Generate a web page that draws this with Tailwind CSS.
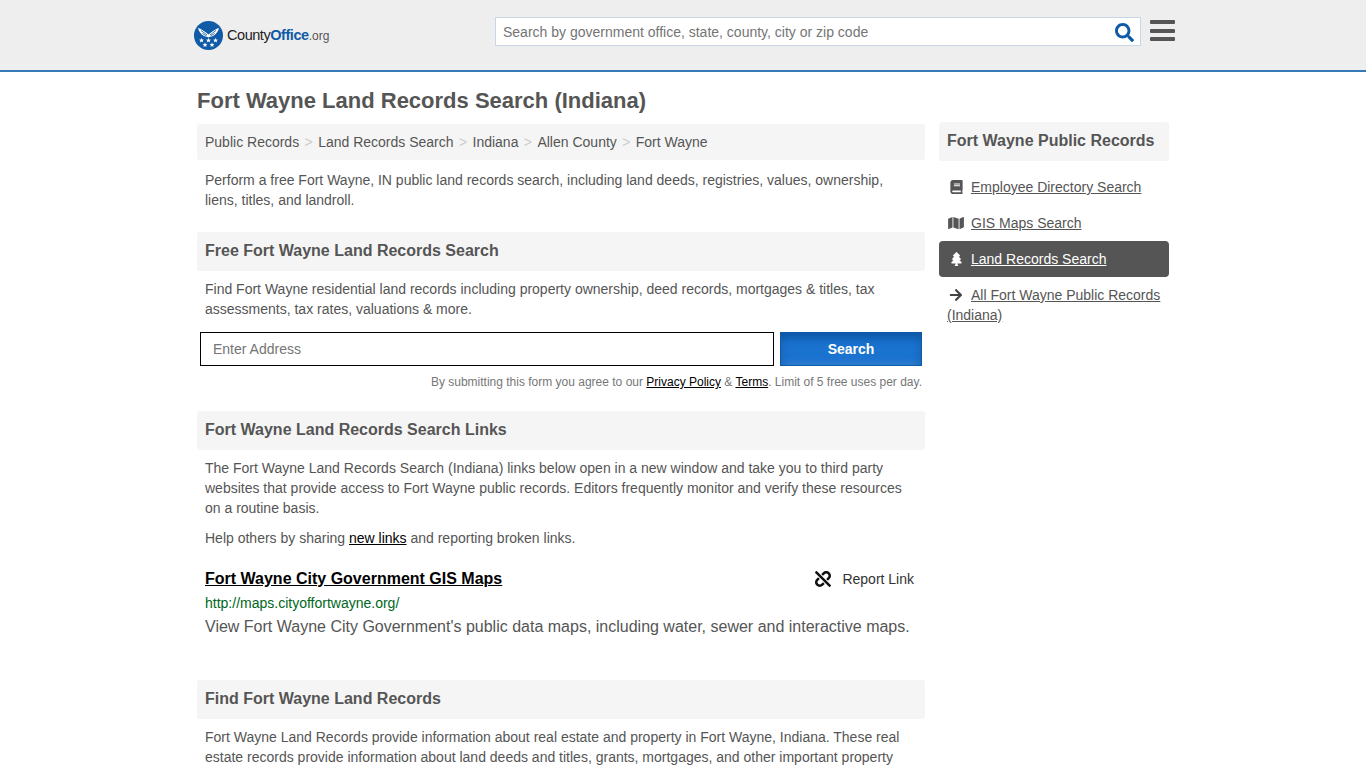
<!DOCTYPE html>
<html lang="en">
<head>
<meta charset="utf-8">
<title>Fort Wayne Land Records Search (Indiana)</title>
<script src="https://cdn.jsdelivr.net/npm/@tailwindcss/browser@4"></script>
</head>
<body class="h-screen overflow-hidden bg-white font-['Liberation_Sans',Arial,sans-serif] text-[14px] leading-[20px] text-[#555]">
<header class="h-[72px] bg-[#eee] border-b-2 border-[#337ab7]">
  <div class="w-[982px] ml-[194px] flex items-start h-[70px]">
    <a class="flex items-center w-[301px] h-[29px] mt-[21px]">
      <svg class="w-[29px] h-[29px] shrink-0" viewBox="0 0 29 29">
        <circle cx="14.5" cy="14.500" r="14.5" fill="#0f5ba7"/>
        <path d="M4 7c3 .5 6 3 10.500 6.500C19 10 22 7.500 25 7c-.5 3-3 6.500-6 8-2 1-3 .5-4.500 1.500-1.500-1-2.500-.5-4.500-1.500C7 13.500 4.500 10 4 7z" fill="#fff"/>
        <path d="M7 9.500l6 4.500M22 9.500l-6 4.500M8.500 12.500l4 2.500M20.500 12.500l-4 2.500" stroke="#0f5ba7" stroke-width=".8"/>
        <path d="M7.500 17l.7 1.600 1.700.1-1.300 1.100.5 1.700-1.600-.9-1.600.9.500-1.700-1.300-1.100 1.700-.1zM14.500 17l.7 1.600 1.700.1-1.300 1.100.5 1.700-1.600-.9-1.600.9.500-1.700-1.300-1.100 1.700-.1zM21.500 17l.7 1.600 1.700.1-1.300 1.100.5 1.700-1.600-.9-1.600.9.500-1.700-1.300-1.100 1.700-.1zM11 21.500l.7 1.600 1.700.1-1.300 1.100.5 1.700-1.600-.9-1.600.9.500-1.700-1.300-1.100 1.700-.1zM18 21.500l.7 1.600 1.700.1-1.300 1.100.5 1.700-1.600-.9-1.600.9.500-1.700-1.300-1.100 1.700-.1z" fill="#fff"/>
      </svg>
      <span class="ml-[4px] text-[14.500px] tracking-[-0.45px] text-[#222] whitespace-nowrap">County<span class="text-[#0f5ba7] font-bold">Office</span><span class="text-[12px] tracking-normal text-[#555]">.org</span></span>
    </a>
    <div class="mt-[17px] w-[646px] h-[29px] bg-white border border-[#c9d6e4] flex items-center justify-between pl-[7px] pr-[6px]">
      <span class="text-[14px] text-[#757575]">Search by government office, state, county, city or zip code</span>
      <svg class="w-[19px] h-[19px] mt-[1px]" viewBox="0 0 512 512"><path fill="#0f5ba7" d="M505 442.7L405.3 343c-4.500-4.500-10.600-7-17-7H372c27.600-35.300 44-79.700 44-128C416 93.100 322.900 0 208 0S0 93.100 0 208s93.100 208 208 208c48.300 0 92.700-16.400 128-44v16.300c0 6.400 2.500 12.500 7 17l99.700 99.700c9.400 9.400 24.600 9.400 33.900 0l28.300-28.300c9.400-9.400 9.400-24.600.1-34zM208 336c-70.700 0-128-57.200-128-128 0-70.700 57.200-128 128-128 70.700 0 128 57.200 128 128 0 70.700-57.200 128-128 128z"/></svg>
    </div>
    <div class="mt-[20px] ml-[9px] w-[25px] flex flex-col gap-[4.500px]">
      <div class="h-[4px] bg-[#555] rounded-[1px]"></div>
      <div class="h-[4px] bg-[#555] rounded-[1px]"></div>
      <div class="h-[4px] bg-[#555] rounded-[1px]"></div>
    </div>
  </div>
</header>

<div class="ml-[197px] w-[972px] flex gap-[14px]">
  <main class="w-[728px] shrink-0">
    <h1 class="mt-[16px] h-[36px] text-[22px] leading-[26px] font-bold text-[#555]">Fort Wayne Land Records Search (Indiana)</h1>
    <nav class="h-[36px] bg-[#f5f5f5] rounded-[3px] px-[8px] flex items-center text-[14px]">
      <span>Public Records</span><span class="mx-[5.400px] text-[#ccc]">&gt;</span><span>Land Records Search</span><span class="mx-[5.400px] text-[#ccc]">&gt;</span><span>Indiana</span><span class="mx-[5.400px] text-[#ccc]">&gt;</span><span>Allen County</span><span class="mx-[5.400px] text-[#ccc]">&gt;</span><span>Fort Wayne</span>
    </nav>
    <p class="mt-[10px] px-[8px]">Perform a free Fort Wayne, IN public land records search, including land deeds, registries, values, ownership, liens, titles, and landroll.</p>

    <h2 class="mt-[22px] h-[39px] bg-[#f5f5f5] rounded-[3px] px-[8px] pb-[2px] flex items-center text-[16px] font-bold">Free Fort Wayne Land Records Search</h2>
    <p class="mt-[8px] px-[8px]">Find Fort Wayne residential land records including property ownership, deed records, mortgages &amp; titles, tax assessments, tax rates, valuations &amp; more.</p>
    <form class="mt-[13px] ml-[3px] w-[722px] flex gap-[6px]">
      <div class="w-[574px] h-[34px] border border-black bg-white px-[12px] flex items-center text-[#757575]">Enter Address</div>
      <div class="w-[142px] h-[34px] border border-[#0f5ba7] flex items-center justify-center text-white font-bold bg-[#1b73d0] shadow-[inset_0_5px_10px_#0b55a3,inset_0_-2px_6px_#3a86d0]">Search</div>
    </form>
    <p class="mt-[6px] ml-[3px] w-[722px] text-right text-[12px] leading-[20px] text-[#777]">By submitting this form you agree to our <a class="underline text-black">Privacy Policy</a> &amp; <a class="underline text-black">Terms</a>. Limit of 5 free uses per day.</p>

    <h2 class="mt-[19px] h-[39px] bg-[#f5f5f5] rounded-[3px] px-[8px] pb-[2px] flex items-center text-[16px] font-bold">Fort Wayne Land Records Search Links</h2>
    <p class="mt-[8px] px-[8px]">The Fort Wayne Land Records Search (Indiana) links below open in a new window and take you to third party websites that provide access to Fort Wayne public records. Editors frequently monitor and verify these resources on a routine basis.</p>
    <p class="mt-[10px] px-[8px]">Help others by sharing <a class="underline text-black">new links</a> and reporting broken links.</p>

    <div class="mt-[21px] px-[8px] flex items-center justify-between h-[20px]">
      <a class="underline text-black font-bold text-[16px]">Fort Wayne City Government GIS Maps</a>
      <span class="flex items-center text-[#333] pr-[3px]">
        <svg class="w-[16px] h-[16px] mr-[11px]" viewBox="0 0 512 512"><path fill="#111" d="M304.083 405.907c4.686 4.686 4.686 12.284 0 16.971l-44.674 44.674c-59.263 59.262-155.693 59.266-214.961 0-59.264-59.265-59.264-155.696 0-214.96l44.675-44.675c4.686-4.686 12.284-4.686 16.971 0l39.598 39.598c4.686 4.686 4.686 12.284 0 16.971l-44.675 44.674c-28.072 28.073-28.072 73.75 0 101.823 28.072 28.072 73.75 28.073 101.824 0l44.674-44.674c4.686-4.686 12.284-4.686 16.971 0l39.597 39.598zm-56.568-260.216c4.686 4.686 12.284 4.686 16.971 0l44.674-44.674c28.072-28.075 73.75-28.073 101.824 0 28.072 28.073 28.072 73.75 0 101.823l-44.675 44.674c-4.686 4.686-4.686 12.284 0 16.971l39.598 39.598c4.686 4.686 12.284 4.686 16.971 0l44.675-44.675c59.265-59.265 59.265-155.695 0-214.96-59.266-59.264-155.696-59.264-214.961 0l-44.674 44.674c-4.686 4.686-4.686 12.284 0 16.971l39.597 39.598zm234.828 359.28l22.627-22.627c9.373-9.373 9.373-24.569 0-33.941L63.598 7.029c-9.373-9.373-24.569-9.373-33.941 0L7.029 29.657c-9.373 9.373-9.373 24.569 0 33.941l441.373 441.373c9.373 9.372 24.569 9.372 33.941 0z"/></svg>
        Report Link
      </span>
    </div>
    <div class="mt-[4px] px-[8px] text-[#006621]">http://maps.cityoffortwayne.org/</div>
    <p class="mt-[3px] px-[8px] text-[16px] leading-[22px] text-[#555]">View Fort Wayne City Government's public data maps, including water, sewer and interactive maps.</p>

    <h2 class="mt-[42px] h-[39px] bg-[#f5f5f5] rounded-[3px] px-[8px] pb-[2px] flex items-center text-[16px] font-bold">Find Fort Wayne Land Records</h2>
    <p class="mt-[8px] px-[8px]">Fort Wayne Land Records provide information about real estate and property in Fort Wayne, Indiana. These real estate records provide information about land deeds and titles, grants, mortgages, and other important property</p>
  </main>

  <aside class="w-[230px] shrink-0 pt-[50px]">
    <h3 class="h-[39px] bg-[#f5f5f5] rounded-[3px] px-[8px] pb-[2px] flex items-center text-[16px] font-bold">Fort Wayne Public Records</h3>
    <ul class="mt-[8px]">
      <li class="h-[36px] px-[8px] py-[8px] flex items-start">
        <span class="w-[24px] shrink-0 pl-[3px] pt-[3px]"><svg class="w-[13px] h-[14px]" viewBox="0 0 448 512"><path fill="#555" d="M448 360V24c0-13.300-10.700-24-24-24H96C43 0 0 43 0 96v320c0 53 43 96 96 96h328c13.300 0 24-10.700 24-24v-16c0-7.500-3.500-14.300-8.900-18.700-4.200-15.400-4.200-59.300 0-74.700 5.400-4.300 8.900-11.100 8.900-18.600zM128 134c0-3.300 2.700-6 6-6h212c3.300 0 6 2.700 6 6v20c0 3.300-2.700 6-6 6H134c-3.300 0-6-2.700-6-6v-20zm0 64c0-3.300 2.700-6 6-6h212c3.300 0 6 2.700 6 6v20c0 3.300-2.700 6-6 6H134c-3.300 0-6-2.700-6-6v-20zm253.400 250H96c-17.700 0-32-14.300-32-32 0-17.600 14.400-32 32-32h285.400c-1.900 17.100-1.900 46.900 0 64z"/></svg></span>
        <a class="underline">Employee Directory Search</a>
      </li>
      <li class="h-[36px] px-[8px] py-[8px] flex items-start">
        <span class="w-[24px] shrink-0 pl-[1px] pt-[3px]"><svg class="w-[16px] h-[14px]" viewBox="0 0 576 512"><path fill="#555" d="M0 117.660v346.320c0 11.320 11.430 19.060 21.940 14.860L160 416V32L20.120 87.950A32.006 32.006 0 0 0 0 117.660zM192 416l192 64V96L192 32v384zM554.060 33.160L416 96v384l139.880-55.950A31.996 31.996 0 0 0 576 394.340V48.020c0-11.320-11.430-19.060-21.940-14.860z"/></svg></span>
        <a class="underline">GIS Maps Search</a>
      </li>
      <li class="h-[36px] px-[8px] py-[8px] flex items-start bg-[#555] rounded-[4px] text-white">
        <span class="w-[24px] shrink-0 pl-[4px] pt-[3px]"><svg class="w-[11px] h-[14px]" viewBox="0 0 384 512"><path fill="#fff" d="M378.310 378.490L298.420 288h30.630c9.010 0 16.980-5 20.780-13.060 3.800-8.040 2.550-17.260-3.280-24.050L268.420 160h28.890c9.100 0 17.300-5.350 20.860-13.610 3.520-8.130 1.860-17.590-4.240-24.080L203.660 4.830c-6.030-6.450-17.280-6.450-23.320 0L70.060 122.310c-6.100 6.490-7.750 15.950-4.240 24.080C69.380 154.650 77.590 160 86.690 160h28.890l-78.140 90.910c-5.810 6.780-7.060 15.990-3.270 24.040C37.970 283 45.930 288 54.950 288h30.630L5.690 378.490c-6 6.790-7.360 16.090-3.560 24.260 3.750 8.050 12 13.250 21.010 13.250H160v24.450l-30.290 48.400c-5.320 10.640 2.420 23.160 14.310 23.160h95.960c11.890 0 19.630-12.520 14.310-23.160L224 440.450V416h136.860c9.010 0 17.260-5.200 21.010-13.250 3.800-8.170 2.440-17.470-3.560-24.260z"/></svg></span>
        <a class="underline">Land Records Search</a>
      </li>
      <li class="px-[8px] py-[8px]">
        <svg class="inline-block align-[-2px] w-[14px] h-[14px] ml-[2px] mr-[8px]" viewBox="0 0 448 512"><path fill="#444" d="M190.500 66.900l22.200-22.200c9.400-9.400 24.600-9.400 33.900 0L441 239c9.400 9.400 9.400 24.600 0 33.900L246.600 467.300c-9.400 9.400-24.600 9.400-33.900 0l-22.200-22.200c-9.500-9.500-9.300-25 .4-34.300L311.400 296H24c-13.300 0-24-10.700-24-24v-32c0-13.300 10.700-24 24-24h287.400L190.900 101.200c-9.800-9.300-10-24.800-.4-34.300z"/></svg><a class="underline">All Fort Wayne Public Records (Indiana)</a>
      </li>
    </ul>
  </aside>
</div>
</body>
</html>
